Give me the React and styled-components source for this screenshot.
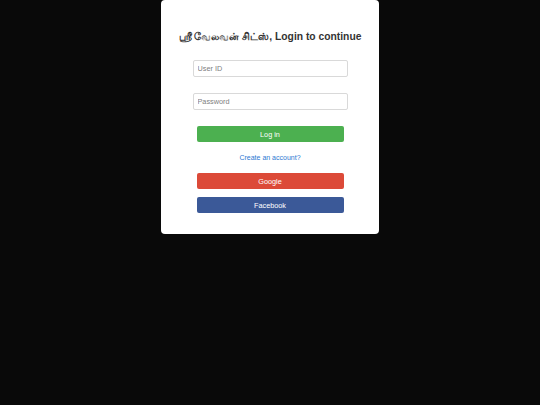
import React from 'react'
import styled, { createGlobalStyle } from 'styled-components'

const GlobalStyle = createGlobalStyle`
  html, body {
    margin: 0;
    padding: 0;
    background: #090909;
  }
  body {
    font-family: "Liberation Sans", Arial, sans-serif;
  }
`

const Page = styled.div`
  min-height: 405px;
  display: flex;
  justify-content: center;
  align-items: flex-start;
`

const Card = styled.div`
  width: 218px;
  background: #ffffff;
  border-radius: 4px;
  padding: 30px 0 21px;
  display: flex;
  flex-direction: column;
  align-items: center;
  box-sizing: border-box;
`

const Title = styled.h1`
  margin: 0;
  font-size: 10.3px;
  line-height: 14px;
  font-weight: bold;
  color: #333333;
  text-align: center;
  white-space: nowrap;
`

const Form = styled.form`
  width: 100%;
  display: flex;
  flex-direction: column;
  align-items: center;
  margin-top: 16px;
`

const Input = styled.input`
  width: 155px;
  height: 17px;
  box-sizing: border-box;
  border: 1px solid #d9d9d9;
  border-radius: 2px;
  padding: 0 4px;
  margin-bottom: 16px;
  font-family: inherit;
  font-size: 7.3px;
  color: #555;
  outline: none;
  &::placeholder {
    color: #808080;
  }
`

const Button = styled.button`
  width: 147px;
  height: 16px;
  box-sizing: border-box;
  border: none;
  border-radius: 2px;
  padding: 0;
  margin-top: ${(p) => p.top || '0px'};
  background: ${(p) => p.bg};
  color: #ffffff;
  font-family: inherit;
  font-size: 7.3px;
  cursor: pointer;
`

const Link = styled.a`
  display: block;
  margin-top: 11px;
  font-size: 7px;
  line-height: 9px;
  color: #2d78d2;
  text-decoration: none;
`

export default function App() {
  return (
    <>
      <GlobalStyle />
      <Page>
        <Card>
          <Title>ஸ்ரீ வேலவன் சிட்ஸ், Login to continue</Title>
          <Form onSubmit={(e) => e.preventDefault()}>
            <Input type="text" placeholder="User ID" />
            <Input type="password" placeholder="Password" />
            <Button bg="#4cb050">Log in</Button>
            <Link href="#">Create an account?</Link>
            <Button bg="#dc4a38" top="11px" type="button">
              Google
            </Button>
            <Button bg="#3b5998" top="8px" type="button">
              Facebook
            </Button>
          </Form>
        </Card>
      </Page>
    </>
  )
}
